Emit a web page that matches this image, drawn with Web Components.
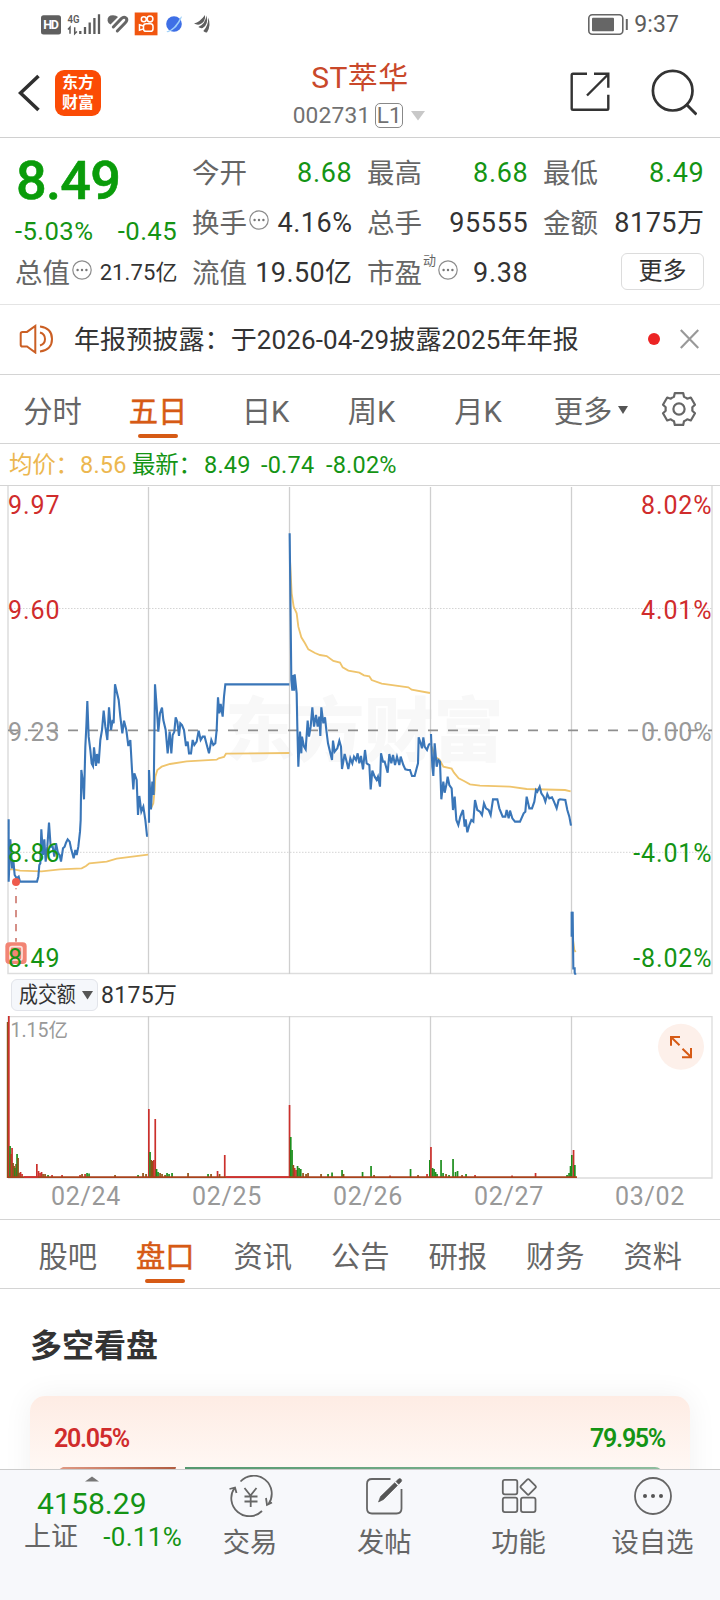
<!DOCTYPE html>
<html lang="zh-CN">
<head>
<meta charset="utf-8">
<title>ST萃华 002731</title>
<style>
html,body{margin:0;padding:0;background:#fff}
body{width:720px;height:1600px;overflow:hidden;font-family:Roboto,"Noto Sans CJK SC",sans-serif;color:#333}
</style>
</head>
<body>
<stock-page></stock-page>
<script>
const define = (name, css, html) => customElements.define(name, class extends HTMLElement {
  constructor() {
    super();
    const t = document.createElement('template');
    t.innerHTML = `<style>:host{display:block;box-sizing:border-box}*{box-sizing:border-box}svg{display:block}${css}</style>${html}`;
    this.attachShadow({mode: 'open'}).append(t.content.cloneNode(true));
  }
});

/* small round "..." hint */
define('info-dot', `:host{display:block;width:20px;height:20px;flex:none}`,
`<svg width="20" height="20" viewBox="0 0 20 20"><circle cx="10" cy="10" r="9.2" fill="none" stroke="#8c8c8c" stroke-width="1.2"/><g fill="#777"><circle cx="5.6" cy="10" r="1.2"/><circle cx="10" cy="10" r="1.2"/><circle cx="14.4" cy="10" r="1.2"/></g></svg>`);

define('status-bar', `:host{height:48px;display:flex;align-items:flex-start;padding:12px 41px 0 40px;color:#5c5c5c}
.time{margin-left:5px;font-size:23px;line-height:26px;letter-spacing:.1px}
.sp{flex:1}`,
`<svg width="172" height="26" viewBox="40 12 172 26">
<rect x="41" y="15.300" width="20" height="19.200" rx="2.500" fill="#5f5f5f"/>
<text x="51" y="29.300" font-size="12.500" font-weight="700" fill="#fff" text-anchor="middle" font-family="Roboto" textLength="15.500">HD</text>
<text x="67.500" y="23" font-size="11.500" font-weight="600" fill="#5c5c5c" font-family="Roboto" textLength="12" lengthAdjust="spacingAndGlyphs">4G</text>
<path d="M68 29.500l2-2.200v6.500M74.700 27.200v6.500l2.200-2.300" fill="none" stroke="#5c5c5c" stroke-width="1.500"/>
<path d="M80.300 31v3M85 27v7M89.700 22.500v11.500M94.400 18v16M99 14.300v19.700" stroke="#5c5c5c" stroke-width="2.300" fill="none"/>
<path d="M107.600 21q-.6-5.800 5.400-5.800q3.500.2 5 1.800l-7.500 7.500q-2.500-1.300-2.900-3.500z" fill="#666"/><g fill="none" stroke="#666" stroke-width="3" stroke-linecap="round"><path d="M113.300 27l8-8.300q3-2.700 5.200-.2q1 2-1.200 4.300l-8 8.200"/></g>
<rect x="134.700" y="12.500" width="22.800" height="22.800" fill="#f1560f"/>
<g fill="none" stroke="#fff" stroke-width="1.500"><circle cx="143.800" cy="19.200" r="2.500"/><circle cx="150" cy="19" r="2.900"/><rect x="143.500" y="23.800" width="9.500" height="7.500" rx="2.600"/><path d="M143.500 26l-4-1.300v5.500l4-1.300"/></g>
<circle cx="174" cy="24" r="7.800" fill="#3e6fe6"/><path d="M166.500 31.500q8-2 14.500-15l1 .3q-4 12-14 15.500q-1 .2-1.500-.8z" fill="#9fd0fa"/>
<g fill="#5f5f5f"><path d="M194 23.500q6-1.500 11-8.500q1 7-5.500 9.500q-3 .5-5.500-1z"/><path d="M198.300 27q7-3 8.200-11.500q2.300 9-3.800 12.500q-2.400.5-4.400-1z"/><path d="M203.300 31q5-5 5-13.500q3 8-1.200 14.800q-2 .7-3.800-1.300z"/></g>
</svg>
<span class="sp"></span>
<svg width="42" height="24" viewBox="587 12 42 24"><rect x="588.800" y="14.800" width="34" height="19.400" rx="3.500" fill="none" stroke="#666" stroke-width="1.600"/><rect x="592" y="17.800" width="22" height="13.400" rx="1" fill="#666"/><path d="M626.800 19v11" stroke="#666" stroke-width="2"/></svg>
<div class="time">9:37</div>`);

define('app-header', `:host{height:90px;display:grid;grid-template-columns:143px 1fr 141px;border-bottom:1px solid #d0d0d0;padding:0 20px 0 18px}
.left{display:flex;padding-top:22px;gap:15px}
.logo{width:46px;height:46px;border-radius:9px;background:#fb4b05;color:#fff;font:700 16px/20px Roboto,"Noto Sans CJK SC",sans-serif;text-align:center;padding-top:3px}
.name{font-size:30px;line-height:34px;padding-top:13px;color:#c9482a;letter-spacing:.4px;text-align:center}
.code{display:flex;justify-content:center;align-items:center;color:#717171;font-size:22.700px;line-height:25px;margin-top:8px;letter-spacing:.2px;margin-left:-2px}
.code b{font-weight:400;border:1.500px solid #888;border-radius:5px;height:25px;line-height:23px;width:28px;margin-left:5px;font-size:22.500px;text-align:center}
.right{display:flex;justify-content:flex-end;gap:41px;padding-top:20px;padding-right:3px}`,
`<div class="left"><svg width="22" height="46" viewBox="18 70 22 46"><path d="M38.500 76L20.500 93l18 17" fill="none" stroke="#2f2f2f" stroke-width="3.600"/></svg>
<div class="logo">东方<br>财富</div></div>
<div class="mid"><div class="name">ST萃华</div><div class="code">002731<b>L1</b><svg style="margin-left:8px" width="14" height="10"><path d="M0 0h14l-7 9.500z" fill="#c8c8c8"/></svg></div></div>
<div class="right"><svg width="40" height="44" viewBox="571 69 40 44"><g fill="none" stroke="#333" stroke-width="2.400"><path d="M588 74.800h-14q-1.300 0-1.300 1.300v33.400q0 1.300 1.300 1.300h34q1.300 0 1.300-1.300v-13.700M595 74.800h14.300v14M609 75.500l-21 21"/></g></svg>
<svg width="46" height="50" viewBox="651 68 46 50"><circle cx="672.700" cy="90.700" r="19.800" fill="none" stroke="#333" stroke-width="2.700"/><path d="M686 104l10.500 10.500" stroke="#333" stroke-width="3"/></svg></div>`);

define('quote-cell', `:host{display:flex;align-items:center;justify-content:space-between;height:50px;font-size:27px;line-height:50px;white-space:nowrap}
.l{color:#666;display:flex;align-items:center;font-size:27.500px;margin:1px 0 0 -1px}.v{letter-spacing:var(--ls,.7px);font-size:var(--fs,27px);color:var(--c,#333);margin-right:-1.500px}`,
`<span class="l"><slot name="label"></slot></span><span class="v"><slot></slot></span>`);

define('quote-panel', `:host{height:167px;border-bottom:1px solid #e4e4e4;padding:10px 17px 0 16px;display:grid;grid-template-columns:160px 158px 159px 159px;column-gap:17px;align-items:start}
.g{--c:#149414}
.big{font-size:54px;font-weight:500;line-height:65px;height:67px;color:#0a9c0a;letter-spacing:-.7px;-webkit-text-stroke:.6px #0a9c0a}
.chg{display:flex;justify-content:space-between;font-size:25.700px;line-height:32px;color:#149414;letter-spacing:.4px;margin:0 -1px 0 -1px}
.label{display:flex;align-items:center}
sup{font-size:13px;line-height:14px;align-self:flex-start;margin:5px 0 0 1px;vertical-align:baseline}
.more{width:83px;height:37px;border:1.500px solid #dcdcdc;border-radius:6px;font-size:24px;line-height:35px;text-align:center;margin:5px -1px 0 auto;color:#333}
.label info-dot{margin:-7px 0 0 2px}`,
`<div><div class="big">8.49</div><div class="chg"><span>-5.03%</span><span>-0.45</span></div>
<quote-cell style="--fs:22px;--ls:.1px;margin-top:1px"><div slot="label" class="label">总值<info-dot></info-dot></div>21.75亿</quote-cell></div>
<div><quote-cell class="g"><span slot="label">今开</span>8.68</quote-cell><quote-cell style="--ls:.5px"><div slot="label" class="label">换手<info-dot></info-dot></div>4.16%</quote-cell><quote-cell style="--ls:.4px"><span slot="label">流值</span>19.50亿</quote-cell></div>
<div><quote-cell class="g"><span slot="label">最高</span>8.68</quote-cell><quote-cell><span slot="label">总手</span>95555</quote-cell><quote-cell><div slot="label" class="label">市盈<sup>动</sup><info-dot></info-dot></div>9.38</quote-cell></div>
<div><quote-cell class="g"><span slot="label">最低</span>8.49</quote-cell><quote-cell style="--ls:.5px"><span slot="label">金额</span>8175万</quote-cell><div class="more">更多</div></div>`);

define('notice-bar', `:host{height:70px;border-bottom:1px solid #d4d4d4;display:flex;align-items:center;padding:0 21px 0 19px}
.t{font-size:26px;line-height:40px;margin-left:19px;margin-top:1px;white-space:nowrap;flex:1;letter-spacing:.12px}
.dot{width:12px;height:12px;border-radius:6px;background:#ec2424;margin-right:20px;margin-top:-1px}`,
`<svg width="36" height="30" viewBox="19 324 36 30" style="margin-top:-1px"><g fill="none" stroke="#cb5f24" stroke-width="2"><path d="M35.300 326v26.500l-8.300-6h-4.500q-1.800 0-1.800-1.800v-11q0-1.800 1.800-1.800h4.500z"/><path d="M40 332.500q5 1.500 5 6.500t-5 6.500M40 326.500q12 1.500 12 12.500t-12 12.500"/></g></svg>
<div class="t">年报预披露：于2026-04-29披露2025年年报</div><i class="dot"></i>
<svg width="19" height="20" style="margin-top:-2px"><path d="M.8 1l17.500 18M18.300 1L.8 19" stroke="#999" stroke-width="2.200"/></svg>`);

define('tab-item', `:host{display:flex;flex-direction:column;align-items:center;height:68px;color:#666;font-size:29.300px;position:relative;white-space:nowrap}
:host([on]){color:#d65a15;-webkit-text-stroke:.5px #d65a15}
.t{line-height:var(--lh,74px)}
:host([on])::after{content:"";position:absolute;bottom:5px;width:40px;height:4px;border-radius:2px;background:#d65a15}`,
`<div class="t"><slot></slot></div>`);

define('period-tabs', `:host{height:69px;border-bottom:1px solid #d4d4d4;display:grid;grid-template-columns:105px 106px 109px 103px 110px 112px 1fr;grid-template-rows:68px}`,
`<tab-item>分时</tab-item><tab-item on>五日</tab-item><tab-item>日K</tab-item><tab-item>周K</tab-item><tab-item>月K</tab-item>
<tab-item><span style="display:flex;align-items:center;gap:6px;padding-left:4px">更多<svg width="10" height="8" style="margin-top:-4px"><path d="M0 0h10l-5 8z" fill="#555"/></svg></span></tab-item>
<svg width="36" height="38" viewBox="-18 -18 36 36" style="margin:15px 0 0 16px"><g fill="none" stroke="#666" stroke-width="2.200" stroke-linejoin="round"><path d="M-4.200 -15.900H4.200L5 -12.200Q6.800 -11.400 8.200 -10.300L11.800 -11.500L16 -4.300L13.300 -1.700Q13.500 0 13.300 1.700L16 4.300L11.800 11.500L8.200 10.300Q6.800 11.400 5 12.200L4.200 15.900H-4.200L-5 12.200Q-6.800 11.400 -8.200 10.300L-11.800 11.500L-16 4.300L-13.300 1.700Q-13.500 0 -13.300 -1.700L-16 -4.300L-11.800 -11.500L-8.200 -10.300Q-6.800 -11.400 -5 -12.200Z"/><circle r="5.600"/></g></svg>`);

define('chart-legend', `:host{height:41px;display:flex;font-size:23.500px;line-height:42px;color:#149414;padding-left:9px;white-space:nowrap;letter-spacing:.2px}
.y{color:#ecb750}span{display:block}.c{letter-spacing:-.3px}`,
`<span class="y c" style="width:71px">均价：</span><span class="y" style="width:52px">8.56</span><span class="c" style="width:72px">最新：</span><span style="width:57px">8.49</span><span style="width:65px">-0.74</span><span>-8.02%</span>`);

define('price-chart', `:host{height:490px}
text{font-family:Roboto,"Noto Sans CJK SC",sans-serif;font-size:25px;letter-spacing:.9px}
.r{fill:#d02c2c}.g{fill:#149414}.n{fill:#999}.wm{font-family:"Noto Sans CJK SC",sans-serif;font-weight:900;font-size:70px;fill:#f8f8f8;letter-spacing:-.5px}
.p{fill:none;stroke:#3a76b8;stroke-width:6.300}.a{fill:none;stroke:#efc46c;stroke-width:5.500}`,
`<svg width="720" height="490" viewBox="0 485 720 490">
<text class="wm" x="225" y="756">东方财富</text>
<path d="M0 485.500H720" stroke="#d4d4d4"/><path d="M8 486V973.500H712V486" fill="none" stroke="#ddd" stroke-width="1.500"/>
<path d="M148.500 487V974M289.500 487V974M430.500 487V974M571.500 487V974" stroke="#cfcfcf" stroke-width="1.300"/>
<path d="M8 608.500H712M8 852.300H712" stroke="#d4d4d4" stroke-dasharray="1.500 1.500"/>
<path d="M8 730.300H712" stroke="#8f8f8f" stroke-width="1.800" stroke-dasharray="10 10"/>
<g text-anchor="start"><text class="r" x="8" y="514">9.97</text><text class="r" x="8" y="618.500">9.60</text><text class="n" x="8" y="740.500">9.23</text></g>
<g transform="translate(0 480) scale(.33333)">
<polyline class="a" points="26,1168 40,1168 60,1172 125,1174 180,1168 245,1165 258,1158 268,1150 320,1145 350,1136 444,1124"/>
<polyline class="a" points="453,985 460,970 464,930 466,890 472,870 485,860 510,852 560,844 650,839 656,835 672,831 678,821 868,819"/>
<polyline class="p" points="26,1018 26,1205 31,1078 36,1165 40,1140 44,1185 50,1195 56,1190 60,1205 111,1205 115,1190 118,1155 121,1150 124,1048 129,1125 133,1078 137,1145 142,1100 147,1028 152,1100 158,1100 163,1130 168,1090 174,1120 179,1125 183,1145 189,1105 194,1100 198,1088 203,1078 209,1085 213,1105 217,1120 221,1135 226,1110 230,1125 235,1100 240,1055 242,1020 244,870 248,900 252,958 256,800 259,740 262,663 266,770 271,810 275,850 279,858 282,802 288,858 291,822 296,850 301,780 306,750 311,692 316,740 322,780 327,682 333,750 338,720 341,730 345,613 349,630 356,660 361,710 367,760 372,722 379,750 385,798 391,780 396,870 400,928 403,880 410,900 414,1005 418,948 424,995 430,980 436,1020 441,1067 444,1067"/>
<polyline class="p" points="447,1028 447,870 453,988 457,905 461,945 463,780 465,613 470,680 475,755 480,700 486,683 490,720 497,750 503,820 509,755 514,820 518,765 523,755 527,712 532,725 537,768 541,730 546,735 552,750 558,798 563,785 567,820 573,820 578,780 583,795 590,785 596,752 602,780 608,770 614,770 619,790 627,820 634,780 640,795 646,790 650,750 654,652 658,700 662,672 668,710 672,650 676,613 868,613"/>
<circle cx="48" cy="1206" r="12" fill="#ef5a4c"/><path d="M48 1225V1385" stroke="#cd7a70" stroke-width="5" stroke-dasharray="22 20" stroke-dashoffset="19"/>
<rect x="16" y="1387" width="64" height="65" rx="12" fill="#f28474"/><rect x="30" y="1400" width="36" height="40" rx="6" fill="none" stroke="#fff" stroke-opacity=".75" stroke-width="5"/>
</g>
<text class="g" x="8" y="861.500">8.86</text><text class="g" x="8" y="966.500">8.49</text>
<g transform="translate(280 480) scale(.33333)">
<polyline class="a" points="30,240 35,340 41,380 50,400 55,440 64,472 75,490 85,508 105,519 120,525 140,528 160,543 180,548 188,562 205,572 238,578 252,586 268,589 275,600 305,611 385,622 395,629 450,639"/>
<polyline class="a" points="455,800 465,830 478,838 490,860 515,866 522,878 536,895 552,903 570,913 600,917 690,920 740,927 855,930 872,934"/>
<polyline class="a" points="879,1380 883,1410 887,1416"/>
<polyline class="p" points="29,160 34,600 37,632 38,585 42,632 44,583 50,640 52,740 55,860 60,755 64,820 66,770 72,800 77,808 83,722 87,770 92,740 97,682 102,740 108,705 113,740 118,710 121,768 124,682 130,730 135,712 139,750 144,790 150,815 156,840 159,782 164,815 172,805 178,782 183,800 186,867 194,822 200,845 205,867 211,835 217,850 222,830 228,840 233,820 238,850 243,828 249,868 255,810 260,850 268,855 272,928 277,872 284,890 290,900 294,890 300,920 303,820 309,845 314,845 323,878 328,822 334,850 339,825 345,855 351,830 358,855 362,830 370,855 376,868 384,870 390,870 396,888 404,888 410,865 414,850 416,772 422,790 426,805 430,772 434,800 441,810 446,795 450,790"/>
<polyline class="p" points="453,762 457,860 460,888 464,790 470,860 475,840 480,845 484,958 490,905 494,938 500,910 503,890 508,915 515,925 519,990 524,950 529,1020 535,1035 541,1010 549,990 554,1040 557,1018 562,1057 568,1035 574,1020 580,1025 585,960 592,990 600,995 606,1005 612,970 618,985 626,990 632,1005 639,958 652,958 658,985 668,1010 676,1010 680,990 686,1015 690,992 697,1015 705,1025 720,1025 731,1000 736,995 740,950 748,985 756,985 763,965 768,930 772,935 779,920 784,940 791,950 796,965 802,942 808,955 816,952 822,965 830,985 836,960 840,958 856,960 862,990 868,1010 873,1037"/>
<polyline class="p" points="875,1295 875,1370 878,1295 880,1465 884,1465 884,1478 887,1484"/>
</g>
<g text-anchor="end"><text class="r" x="712.500" y="514">8.02%</text><text class="r" x="712.500" y="618.500">4.01%</text><text class="n" x="712.500" y="740.500">0.00%</text><text class="g" x="712.500" y="861.500">-4.01%</text><text class="g" x="712.500" y="966.500">-8.02%</text></g>
</svg>`);

define('volume-head', `:host{height:41px;display:flex;align-items:center;padding-left:11px}
.b{width:87px;height:32px;border:1px solid #e2e4ea;border-radius:6px;background:#f5f7fb;display:flex;align-items:center;padding-left:7px;margin-top:-1px}
.t{width:60px}.t span{display:block;font-size:22px;line-height:30px;white-space:nowrap;transform:scaleX(.86);transform-origin:0 0}
.v{font-size:23px;line-height:41px;margin-left:3px;letter-spacing:.3px;margin-top:-1px}`,
`<div class="b"><div class="t"><span>成交额</span></div><svg width="11" height="9" style="margin-left:3px"><path d="M0 0h11l-5.500 8.500z" fill="#555"/></svg></div><div class="v">8175万</div>`);

/* intraday turnover bars: x, height, colour key */
const VOL = [
 [7.6,156,'b'],[8.8,162,'r'],[10,32,'g'],[11,24,'b'],[12,30,'r'],[13,15,'b'],[14,12,'b'],[15,10,'g'],[16,14,'b'],[17,24,'g'],[18,20,'b'],[19,5,'b'],[20.5,6,'r'],[22,4,'r'],[36.8,14,'r'],[38.5,7,'r'],[40,5,'r'],[41.5,6,'r'],[43,4,'b'],[45,4,'b'],[48,3,'g'],[52,3,'r'],[62,3,'r'],[80,3,'r'],[82,4,'b'],[85,4,'r'],[87,5,'g'],[89,4.5,'g'],[115,3,'b'],[138,3,'g'],[143,5,'b'],[146,4,'b'],
 [148.8,69,'r'],[150,26,'g'],[151.2,18,'b'],[152.5,17,'b'],[153.8,18,'r'],[155.2,59,'r'],[156.5,9,'g'],[158,6,'g'],[160,5,'b'],[162,4,'b'],[165,3,'b'],[167,5,'g'],[169,4,'g'],[172,5,'g'],[188,5,'b'],[208,4,'g'],[211,4,'b'],[217.5,7,'r'],[219.5,4,'b'],[224.7,23,'r'],
 [289.5,73,'r'],[290.7,41,'g'],[292,28,'g'],[293.3,13,'b'],[294.6,10,'r'],[296,8,'r'],[297.5,12,'g'],[299,10,'g'],[300.7,9,'g'],[303,5,'b'],[306,4,'b'],[308,5,'b'],[321,4,'b'],[328,4,'g'],[332,5.5,'g'],[342,8,'g'],[343.5,4,'b'],[362.5,6,'g'],[371,12,'g'],[374,3,'b'],[390,2.5,'r'],[410.5,9,'g'],[418,3,'b'],[427,4,'r'],
 [429.8,18,'g'],[430.9,31,'r'],[432.5,10,'g'],[434,9,'g'],[435.5,6,'g'],[437,4,'g'],[441,18,'g'],[443,5,'g'],[446,4,'b'],[449,3,'g'],[453,19,'g'],[455.5,6,'g'],[457.5,7,'g'],[462,3,'b'],[466,4,'g'],[475,3,'r'],[512,2.5,'r'],[535.5,5,'r'],[567,3,'g'],[569,5,'g'],[570.5,12,'g'],[571.8,23,'g'],[573.5,28,'r'],[574.8,13,'g']];
const COL = {r: '#cb302c', g: '#1c8d1c', b: '#8c5216'};
const volBars = VOL.map(([x, h, c]) => `<rect x="${x - .8}" y="${1178 - h}" width="1.7" height="${h}" fill="${COL[c]}"/>`).join('');

define('volume-chart', `:host{height:163px}text{font-family:Roboto,"Noto Sans CJK SC",sans-serif;font-size:19.500px;fill:#999}`,
`<svg width="720" height="163" viewBox="0 1016 720 163">
<path d="M8 1178V1016.500H712V1178H8" fill="none" stroke="#dcdcdc" stroke-width="1.300"/>
<path d="M148.500 1016V1178M289.500 1016V1178M430.500 1016V1178M571.500 1016V1178" stroke="#cfcfcf" stroke-width="1.300"/>
${volBars}
<path d="M7.500 1177.200H577" stroke="#a8421c" stroke-width="1.800"/><path d="M24 1177.200H38M226 1177.200H289" stroke="#d03030" stroke-width="1.800"/>
<text x="10.500" y="1037">1.15亿</text>
<circle cx="681" cy="1046.700" r="23" fill="#fdf0ea"/>
<g fill="none" stroke="#d65a15" stroke-width="2"><path d="M671 1045.700V1037h9M671.500 1037.500l8 7.700M691 1048v9.200h-9M690.500 1056.500l-8-7.700"/></g>
</svg>`);

define('date-axis', `:host{height:41px;border-bottom:1px solid #d4d4d4;display:grid;grid-template-columns:repeat(5,141px);padding-left:15.500px;font-size:25px;line-height:35px;color:#999;text-align:center;letter-spacing:.7px}`,
`<span>02/24</span><span>02/25</span><span>02/26</span><span>02/27</span><span>03/02</span>`);

define('section-tabs', `:host{height:69px;border-bottom:1px solid #d4d4d4;display:grid;grid-template-columns:repeat(7,97.500px);grid-template-rows:68px;padding-left:19px;--lh:74px}`,
`<tab-item>股吧</tab-item><tab-item on>盘口</tab-item><tab-item>资讯</tab-item><tab-item>公告</tab-item><tab-item>研报</tab-item><tab-item>财务</tab-item><tab-item>资料</tab-item>`);

define('board-section', `:host{height:180px;overflow:hidden;padding:0 30px}
h2{margin:0;font-size:32px;font-weight:700;line-height:44px;padding-top:35px;height:107px;color:#333}
.card{height:200px;border-radius:15px;background:linear-gradient(#feece4,#fff8f4 74px);box-shadow:0 0 30px rgba(0,0,0,.06);padding:27px 24px 0}
.v{display:flex;justify-content:space-between;font-size:25px;font-weight:600;line-height:32px;height:44px;letter-spacing:-1.300px}
.bar{display:flex;gap:9px;height:12px;margin:0 3px 0 4px}
.bar i{display:block}.a{width:118px;background:linear-gradient(90deg,#e09a84,#b05c40);clip-path:polygon(5px 0,100% 0,calc(100% - 3px) 100%,0 100%,0 3px)}
.b{flex:1;background:linear-gradient(90deg,#55986f,#8ebd9e);border-radius:0 8px 0 0}`,
`<h2>多空看盘</h2><div class="card"><div class="v"><span style="color:#d02c2c">20.05%</span><span style="color:#149414;margin-right:1px">79.95%</span></div><div class="bar"><i class="a"></i><i class="b"></i></div></div>`);

define('nav-item', `:host{display:flex;flex-direction:column;align-items:center;font-size:27.300px;line-height:36px;color:#666;padding-top:5px;white-space:nowrap}
.t{margin-top:8px}`, `<slot name="icon"></slot><div class="t"><slot></slot></div>`);

define('bottom-bar', `:host{height:131px;background:#f7f8fb;border-top:1px solid #ccc;display:grid;grid-template-columns:183px 134px 134.500px 134px 134px}
.idx{padding:6px 0 0 24px;color:#149414}
.n{font-size:30px;line-height:36px;margin:4px 0 0 13px;letter-spacing:.1px}
.r{display:flex;align-items:baseline;justify-content:space-between;font-size:26px;line-height:32px;margin-top:-1px;padding-right:1px;letter-spacing:.3px}.r b{font-weight:400;font-size:27px;letter-spacing:0;color:#666}
.idx svg{margin-left:61px}g{fill:none;stroke:#666;stroke-width:1.800}`,
`<div class="idx"><svg width="14" height="6"><path d="M0 5.500L7 .5l7 5z" fill="#777"/></svg><div class="n">4158.29</div><div class="r"><b>上证</b><span>-0.11%</span></div></div>
<nav-item><svg slot="icon" width="46" height="42" viewBox="227 1475 46 42"><g><path d="M240.500 1481.500a18 18 0 0 1 28 22.500M262 1511a18 18 0 0 1-27.500-23M229.500 1489l5.500-1.500l1.500 5.500M272 1502.500l-5 2.500l-1-7"/><path d="M244.500 1488l6 7.500l6-7.500M244.500 1496.500h13M244.500 1501.500h13M250.700 1495.500v11.500"/></g></svg>交易</nav-item>
<nav-item><svg slot="icon" width="46" height="42" viewBox="362 1475 46 42"><g><path d="M391.500 1479H373q-5 0-5 5v24.500q0 5 5 5h24.500q5 0 5-5V1489"/></g><path d="M379.500 1502l2-5.500l14.200-13.800l2.800 2.800l-14 14zM397 1481.500l2.500-2.500q1.500-1 2.700.3q1 1.200 0 2.500l-2.500 2.500z" fill="#555" stroke="#555" stroke-width=".6"/></svg>发帖</nav-item>
<nav-item><svg slot="icon" width="46" height="42" viewBox="496 1475 46 42"><g><rect x="502.800" y="1479.800" width="14.500" height="14.500" rx="2"/><rect x="502.800" y="1497.600" width="14.500" height="14.500" rx="2"/><rect x="521" y="1497.600" width="14.500" height="14.500" rx="2"/><rect x="522.300" y="1481" width="11.800" height="11.800" rx="1.500" transform="rotate(45 528.200 1486.900)"/></g></svg>功能</nav-item>
<nav-item><svg slot="icon" width="46" height="42" viewBox="630 1475 46 42"><g><circle cx="653" cy="1496" r="18"/></g><circle cx="645" cy="1496" r="2" fill="#555"/><circle cx="653" cy="1496" r="2" fill="#555"/><circle cx="661" cy="1496" r="2" fill="#555"/></svg>设自选</nav-item>`);

define('stock-page', `:host{width:720px;height:1600px;background:#fff;overflow:hidden}`,
`<status-bar></status-bar><app-header></app-header><quote-panel></quote-panel><notice-bar></notice-bar><period-tabs></period-tabs><chart-legend></chart-legend><price-chart></price-chart><volume-head></volume-head><volume-chart></volume-chart><date-axis></date-axis><section-tabs></section-tabs><board-section></board-section><bottom-bar></bottom-bar>`);
</script>
</body>
</html>
